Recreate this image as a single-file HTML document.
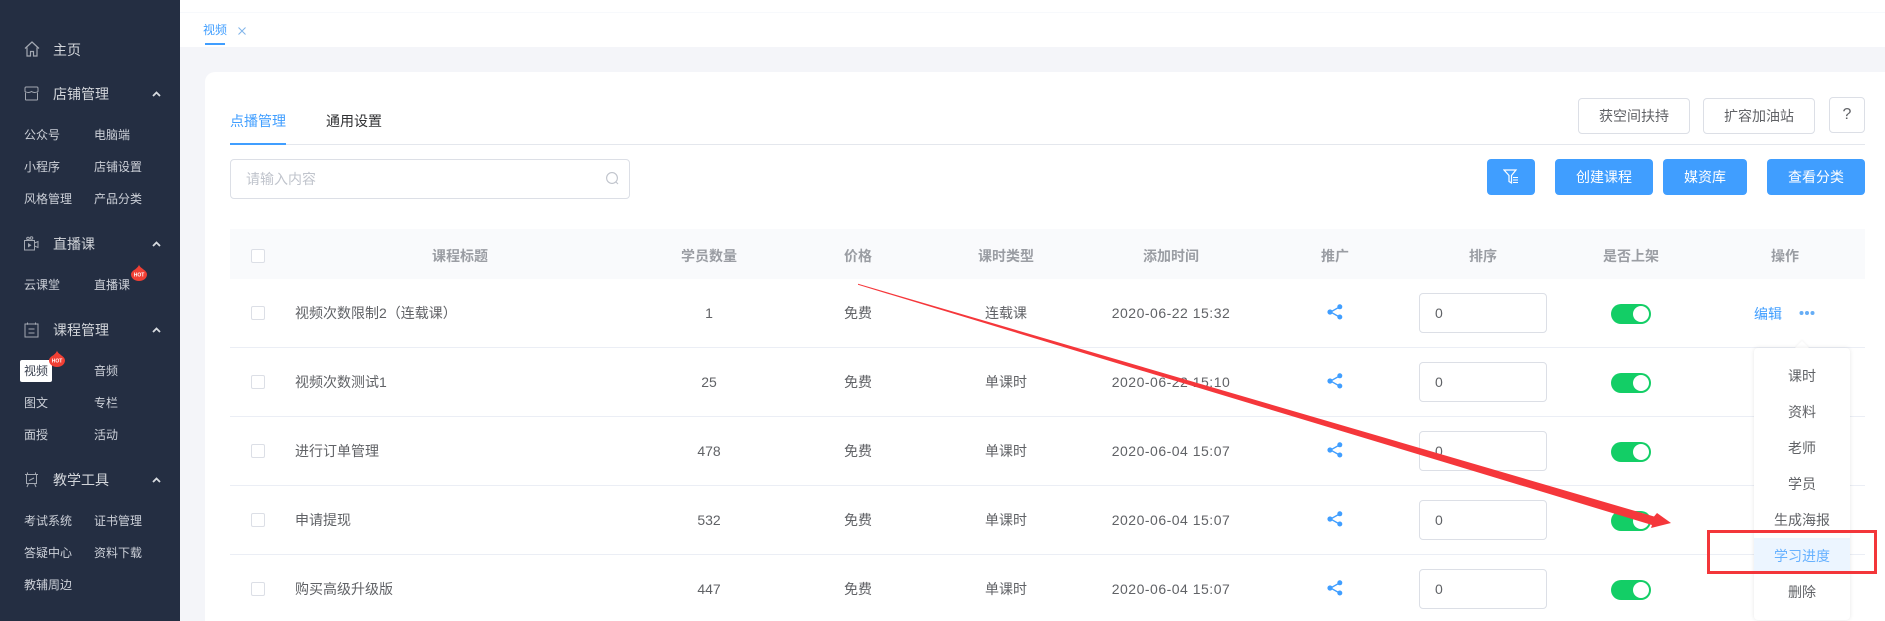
<!DOCTYPE html>
<html lang="zh-CN"><head><meta charset="utf-8"><title>视频</title>
<style>
html,body{margin:0;padding:0;width:1885px;height:621px;overflow:hidden;background:#f4f5f9;font-family:"Liberation Sans","Noto Sans CJK SC",sans-serif;color:#606266;}
div,span,svg{position:absolute;box-sizing:border-box;}
.t{white-space:nowrap;line-height:20px;font-size:14px;}
.c{white-space:nowrap;line-height:20px;font-size:14px;transform:translateX(-50%);}
.d{letter-spacing:.5px;}
.s{white-space:nowrap;line-height:20px;font-size:12px;color:#ccd0d8;}
.m{white-space:nowrap;line-height:20px;font-size:14px;color:#d2d5da;left:53px;}
.h{white-space:nowrap;line-height:20px;font-size:14px;font-weight:700;color:#9a9da3;transform:translateX(-50%);}
.cb{width:14px;height:14px;left:251px;border:1px solid #dcdfe6;border-radius:2px;background:#fff;}
.ln{left:230px;width:1635px;height:1px;background:#ebeef5;}
.in{left:1419px;width:128px;height:40px;border:1px solid #dcdfe6;border-radius:4px;background:#fff;}
.in span{left:15px;top:9px;font-size:14px;line-height:20px;}
.sw{left:1611px;width:40px;height:20px;border-radius:10px;background:#13ce66;}
.sw span{right:2px;top:2px;width:16px;height:16px;border-radius:50%;background:#fff;}
.btn{height:36px;background:#409eff;border-radius:4px;color:#fff;font-size:14px;line-height:36px;text-align:center;white-space:nowrap;top:159px;}
.ob{height:36px;top:98px;border:1px solid #dcdfe6;border-radius:4px;background:#fff;font-size:14px;line-height:34px;text-align:center;white-space:nowrap;color:#606266;}
.pi{left:0;width:96px;text-align:center;font-size:14px;line-height:20px;white-space:nowrap;}
.chev{left:152px;width:9px;height:6px;}
.sh{left:1327px;width:16px;height:16px;}
.sico{left:24px;}
</style></head><body>

<!-- top -->
<div style="left:180px;top:0;width:1705px;height:13px;background:#fff;"></div>
<div style="left:180px;top:12px;width:1705px;height:35px;background:#fff;border-top:1px solid #f7f9fc;"></div>
<div class="t" style="left:203px;top:20px;font-size:12px;color:#409eff;">视频</div>
<svg style="left:237px;top:26px;" width="10" height="10" viewBox="0 0 10 10"><path d="M1.5 1.5l7 7M8.5 1.5l-7 7" stroke="#7fb4ea" stroke-width="1" fill="none"/></svg>
<div style="left:205px;top:43px;width:20px;height:2px;background:#409eff;"></div>

<!-- card -->
<div style="left:205px;top:72px;width:1680px;height:549px;background:#fff;border-radius:10px 0 0 0;"></div>
<div style="left:230px;top:144px;width:1635px;height:1px;background:#e4e7ed;"></div>
<div style="left:230px;top:143px;width:56px;height:2px;background:#409eff;"></div>
<div class="t" style="left:230px;top:111px;color:#409eff;">点播管理</div>
<div class="t" style="left:326px;top:111px;color:#303133;">通用设置</div>

<div class="ob" style="left:1578px;width:112px;">获空间扶持</div>
<div class="ob" style="left:1703px;width:112px;">扩容加油站</div>
<div class="ob" style="left:1829px;width:36px;top:97px;font-size:16px;">?</div>

<!-- search -->
<div style="left:230px;top:159px;width:400px;height:40px;border:1px solid #dcdfe6;border-radius:4px;background:#fff;"></div>
<div class="t" style="left:246px;top:169px;color:#c0c4cc;">请输入内容</div>
<svg style="left:605px;top:171px;" width="15" height="15" viewBox="0 0 15 15"><circle cx="7" cy="7" r="5.4" fill="none" stroke="#c0c4cc" stroke-width="1.1"/><path d="M11 11l2 2" stroke="#c0c4cc" stroke-width="1.1"/></svg>

<!-- blue buttons -->
<div class="btn" style="left:1487px;width:48px;"></div>
<svg style="left:1503px;top:169px;" width="17" height="16" viewBox="0 0 17 16"><path d="M1 1h12L8.5 6.5V14L6 12.5V6.5z" fill="none" stroke="#fff" stroke-width="1.2"/><path d="M10 8.5h5M10 11h5M10 13.5h5" stroke="#fff" stroke-width="1"/></svg>
<div class="btn" style="left:1555px;width:98px;">创建课程</div>
<div class="btn" style="left:1663px;width:84px;">媒资库</div>
<div class="btn" style="left:1767px;width:98px;">查看分类</div>

<!-- table header -->
<div style="left:230px;top:229px;width:1635px;height:50px;background:#f9fafc;"></div>
<div class="cb" style="top:249px;"></div>
<div class="h" style="left:460px;top:246px;">课程标题</div>
<div class="h" style="left:709px;top:246px;">学员数量</div>
<div class="h" style="left:858px;top:246px;">价格</div>
<div class="h" style="left:1006px;top:246px;">课时类型</div>
<div class="h" style="left:1171px;top:246px;">添加时间</div>
<div class="h" style="left:1335px;top:246px;">推广</div>
<div class="h" style="left:1483px;top:246px;">排序</div>
<div class="h" style="left:1631px;top:246px;">是否上架</div>
<div class="h" style="left:1785px;top:246px;">操作</div>

<!-- row 1 -->
<div class="cb" style="top:306px;"></div>
<div class="t" style="left:295px;top:303px;">视频次数限制2（连载课）</div>
<div class="c" style="left:709px;top:303px;">1</div>
<div class="c" style="left:858px;top:303px;">免费</div>
<div class="c" style="left:1006px;top:303px;">连载课</div>
<div class="c d" style="left:1171px;top:303px;">2020-06-22 15:32</div>
<svg class="sh" style="top:304px;" viewBox="0 0 16 16"><path d="M12.5 3L3.5 8l9 5" fill="none" stroke="#409eff" stroke-width="1.3"/><circle cx="12.8" cy="2.8" r="2.5" fill="#409eff"/><circle cx="3" cy="8" r="2.6" fill="#409eff"/><circle cx="12.8" cy="13" r="2.5" fill="#409eff"/></svg>
<div class="in" style="top:293px;"><span>0</span></div>
<div class="sw" style="top:304px;"><span></span></div>
<div class="t" style="left:1754px;top:304px;color:#409eff;">编辑</div>
<svg style="left:1798px;top:310px;" width="18" height="6" viewBox="0 0 18 6"><circle cx="3.5" cy="3" r="2" fill="#66adf5"/><circle cx="9" cy="3" r="2" fill="#66adf5"/><circle cx="14.5" cy="3" r="2" fill="#66adf5"/></svg>
<div class="ln" style="top:347px;"></div>

<!-- row 2 -->
<div class="cb" style="top:375px;"></div>
<div class="t" style="left:295px;top:372px;">视频次数测试1</div>
<div class="c" style="left:709px;top:372px;">25</div>
<div class="c" style="left:858px;top:372px;">免费</div>
<div class="c" style="left:1006px;top:372px;">单课时</div>
<div class="c d" style="left:1171px;top:372px;">2020-06-22 15:10</div>
<svg class="sh" style="top:373px;" viewBox="0 0 16 16"><path d="M12.5 3L3.5 8l9 5" fill="none" stroke="#409eff" stroke-width="1.3"/><circle cx="12.8" cy="2.8" r="2.5" fill="#409eff"/><circle cx="3" cy="8" r="2.6" fill="#409eff"/><circle cx="12.8" cy="13" r="2.5" fill="#409eff"/></svg>
<div class="in" style="top:362px;"><span>0</span></div>
<div class="sw" style="top:373px;"><span></span></div>
<div class="ln" style="top:416px;"></div>

<!-- row 3 -->
<div class="cb" style="top:444px;"></div>
<div class="t" style="left:295px;top:441px;">进行订单管理</div>
<div class="c" style="left:709px;top:441px;">478</div>
<div class="c" style="left:858px;top:441px;">免费</div>
<div class="c" style="left:1006px;top:441px;">单课时</div>
<div class="c d" style="left:1171px;top:441px;">2020-06-04 15:07</div>
<svg class="sh" style="top:442px;" viewBox="0 0 16 16"><path d="M12.5 3L3.5 8l9 5" fill="none" stroke="#409eff" stroke-width="1.3"/><circle cx="12.8" cy="2.8" r="2.5" fill="#409eff"/><circle cx="3" cy="8" r="2.6" fill="#409eff"/><circle cx="12.8" cy="13" r="2.5" fill="#409eff"/></svg>
<div class="in" style="top:431px;"><span>0</span></div>
<div class="sw" style="top:442px;"><span></span></div>
<div class="ln" style="top:485px;"></div>

<!-- row 4 -->
<div class="cb" style="top:513px;"></div>
<div class="t" style="left:295px;top:510px;">申请提现</div>
<div class="c" style="left:709px;top:510px;">532</div>
<div class="c" style="left:858px;top:510px;">免费</div>
<div class="c" style="left:1006px;top:510px;">单课时</div>
<div class="c d" style="left:1171px;top:510px;">2020-06-04 15:07</div>
<svg class="sh" style="top:511px;" viewBox="0 0 16 16"><path d="M12.5 3L3.5 8l9 5" fill="none" stroke="#409eff" stroke-width="1.3"/><circle cx="12.8" cy="2.8" r="2.5" fill="#409eff"/><circle cx="3" cy="8" r="2.6" fill="#409eff"/><circle cx="12.8" cy="13" r="2.5" fill="#409eff"/></svg>
<div class="in" style="top:500px;"><span>0</span></div>
<div class="sw" style="top:511px;"><span></span></div>
<div class="ln" style="top:554px;"></div>

<!-- row 5 -->
<div class="cb" style="top:582px;"></div>
<div class="t" style="left:295px;top:579px;">购买高级升级版</div>
<div class="c" style="left:709px;top:579px;">447</div>
<div class="c" style="left:858px;top:579px;">免费</div>
<div class="c" style="left:1006px;top:579px;">单课时</div>
<div class="c d" style="left:1171px;top:579px;">2020-06-04 15:07</div>
<svg class="sh" style="top:580px;" viewBox="0 0 16 16"><path d="M12.5 3L3.5 8l9 5" fill="none" stroke="#409eff" stroke-width="1.3"/><circle cx="12.8" cy="2.8" r="2.5" fill="#409eff"/><circle cx="3" cy="8" r="2.6" fill="#409eff"/><circle cx="12.8" cy="13" r="2.5" fill="#409eff"/></svg>
<div class="in" style="top:569px;"><span>0</span></div>
<div class="sw" style="top:580px;"><span></span></div>

<!-- popover -->
<div style="left:1797px;top:343px;width:10px;height:10px;background:#fff;transform:rotate(45deg);box-shadow:-1px -1px 2px rgba(0,0,0,.04);"></div>
<div style="left:1754px;top:348px;width:96px;height:272px;background:#fff;border-radius:4px;box-shadow:0 0 4px rgba(0,0,0,.1);">
  <div style="left:0;top:190px;width:96px;height:33px;background:#ecf5ff;"></div>
  <div class="pi" style="top:18px;">课时</div>
  <div class="pi" style="top:54px;">资料</div>
  <div class="pi" style="top:90px;">老师</div>
  <div class="pi" style="top:126px;">学员</div>
  <div class="pi" style="top:162px;">生成海报</div>
  <div class="pi" style="top:198px;color:#66b1ff;">学习进度</div>
  <div class="pi" style="top:234px;">删除</div>
</div>

<!-- annotations -->
<svg style="left:0;top:0;" width="1885" height="621" viewBox="0 0 1885 621">
  <polygon points="858,283.800 1654,516.500 1657,513 1671,523 1651,528 1652,525 858,284.800" fill="#f5373b"/>
</svg>
<div style="left:1707px;top:530px;width:170px;height:44px;border:3px solid #f3363a;"></div>

<!-- sidebar -->
<div style="left:0;top:0;width:180px;height:621px;background:#242e42;">
  <svg class="sico" style="top:41px;" width="16" height="16" viewBox="0 0 16 16"><path d="M1 7.500L8 1l7 6.500M3 6.500V15h3.500v-4.500h3V15H13V6.500" fill="none" stroke="#a3a8b2" stroke-width="1.200"/></svg>
  <div class="m" style="top:40px;">主页</div>

  <svg class="sico" style="top:86px;" width="15" height="15" viewBox="0 0 15 15"><path d="M2 1H13Q14 1 14 2.500V5.500Q10.500 7.500 7.500 5.500Q4.500 7.500 1 5.500V2.500Q1 1 2 1zM1.500 6.500V13.500Q1.500 14 2.500 14H12.500Q13.500 14 13.500 13.500V6.500" fill="none" stroke="#a3a8b2" stroke-width="1"/></svg>
  <div class="m" style="top:84px;">店铺管理</div>
  <svg class="chev" style="top:91px;" viewBox="0 0 9 6"><path d="M1 5l3.500-3.500L8 5" fill="none" stroke="#d8dbe0" stroke-width="1.800"/></svg>

  <div class="s" style="left:24px;top:125px;">公众号</div><div class="s" style="left:94px;top:125px;">电脑端</div>
  <div class="s" style="left:24px;top:157px;">小程序</div><div class="s" style="left:94px;top:157px;">店铺设置</div>
  <div class="s" style="left:24px;top:189px;">风格管理</div><div class="s" style="left:94px;top:189px;">产品分类</div>

  <svg class="sico" style="top:236px;" width="15" height="15" viewBox="0 0 15 15"><rect x="0.500" y="4.500" width="10" height="9.500" fill="none" stroke="#a3a8b2"/><path d="M10.500 7l3.500-1.500v6L10.500 10" fill="none" stroke="#a3a8b2"/><path d="M4 7l3.500 2.200L4 11.500z" fill="#a3a8b2"/><circle cx="4" cy="2.500" r="1.300" fill="none" stroke="#a3a8b2"/><circle cx="7.500" cy="2" r="1.300" fill="none" stroke="#a3a8b2"/></svg>
  <div class="m" style="top:234px;">直播课</div>
  <svg class="chev" style="top:241px;" viewBox="0 0 9 6"><path d="M1 5l3.500-3.500L8 5" fill="none" stroke="#d8dbe0" stroke-width="1.800"/></svg>

  <div class="s" style="left:24px;top:275px;">云课堂</div><div class="s" style="left:94px;top:275px;">直播课</div>
  <svg style="left:131px;top:264px;" width="16" height="17" viewBox="0 0 16 17"><path d="M8 0.500C8.500 3 10.500 3.500 12.500 5.500C15 7 16 9 16 10.500C16 14 12.500 17 8 17C3.500 17 0 14 0 10.500C0 8.500 2 6.500 4 5.500C5.500 4 7.500 3 8 0.500z" fill="#f13f34"/><text x="8" y="12.500" font-size="5" font-weight="700" fill="#fff" text-anchor="middle" font-family="Liberation Sans, sans-serif">HOT</text></svg>

  <svg class="sico" style="top:322px;" width="15" height="16" viewBox="0 0 15 16"><path d="M3.500 2H1V15H14V2H11.500M3.500 0.500V2.800M11.500 0.500V2.800M3.500 2H11.500M4.500 7H10.500M4.500 11H10.500" fill="none" stroke="#a3a8b2" stroke-width="1"/></svg>
  <div class="m" style="top:320px;">课程管理</div>
  <svg class="chev" style="top:327px;" viewBox="0 0 9 6"><path d="M1 5l3.500-3.500L8 5" fill="none" stroke="#d8dbe0" stroke-width="1.800"/></svg>

  <div style="left:20px;top:360px;width:32px;height:22px;background:#fff;border-radius:2px;"></div>
  <div class="s" style="left:24px;top:361px;color:#39404f;">视频</div><div class="s" style="left:94px;top:361px;">音频</div>
  <svg style="left:49px;top:350px;" width="16" height="17" viewBox="0 0 16 17"><path d="M8 0.500C8.500 3 10.500 3.500 12.500 5.500C15 7 16 9 16 10.500C16 14 12.500 17 8 17C3.500 17 0 14 0 10.500C0 8.500 2 6.500 4 5.500C5.500 4 7.500 3 8 0.500z" fill="#f13f34"/><text x="8" y="12.500" font-size="5" font-weight="700" fill="#fff" text-anchor="middle" font-family="Liberation Sans, sans-serif">HOT</text></svg>
  <div class="s" style="left:24px;top:393px;">图文</div><div class="s" style="left:94px;top:393px;">专栏</div>
  <div class="s" style="left:24px;top:425px;">面授</div><div class="s" style="left:94px;top:425px;">活动</div>

  <svg class="sico" style="top:472px;" width="15" height="16" viewBox="0 0 15 16"><path d="M1 2.500H14M2.500 2.500H12.500V11.500H2.500ZM3.500 0.500V2.500M11.500 0.500V2.500M5 8.500L7 7.500L10 6M4.500 11.500L3 15M10.500 11.500L12 15" fill="none" stroke="#a3a8b2" stroke-width="1"/></svg>
  <div class="m" style="top:470px;">教学工具</div>
  <svg class="chev" style="top:477px;" viewBox="0 0 9 6"><path d="M1 5l3.500-3.500L8 5" fill="none" stroke="#d8dbe0" stroke-width="1.800"/></svg>

  <div class="s" style="left:24px;top:511px;">考试系统</div><div class="s" style="left:94px;top:511px;">证书管理</div>
  <div class="s" style="left:24px;top:543px;">答疑中心</div><div class="s" style="left:94px;top:543px;">资料下载</div>
  <div class="s" style="left:24px;top:575px;">教辅周边</div>
</div>
</body></html>
